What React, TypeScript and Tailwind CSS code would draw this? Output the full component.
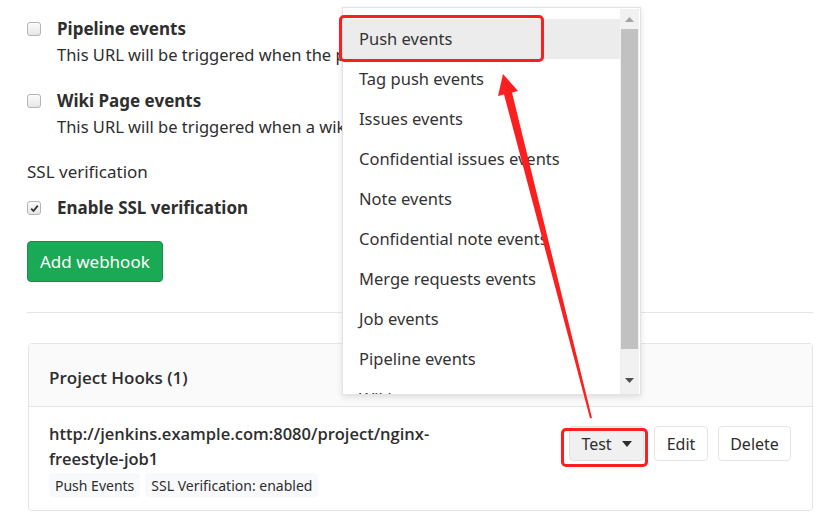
import React from "react"

const menuItems = [
  "Push events",
  "Tag push events",
  "Issues events",
  "Confidential issues events",
  "Note events",
  "Confidential note events",
  "Merge requests events",
  "Job events",
  "Pipeline events",
  "Wiki page events",
]

function Checkbox({ checked = false }: { checked?: boolean }) {
  return (
    <span className="mt-[6px] flex h-[14px] w-[14px] shrink-0 items-center justify-center rounded-[3px] border border-[#b5b5b5] bg-gradient-to-b from-[#fcfcfc] to-[#e6e6e6]">
      {checked && (
        <svg width="9" height="9" viewBox="0 0 9 9">
          <path d="M1.2 4.6 L3.5 7 L7.8 1.6" fill="none" stroke="#333" strokeWidth="1.8" />
        </svg>
      )}
    </span>
  )
}

function EventOption({ title, desc }: { title: string; desc: string }) {
  return (
    <div className="flex gap-[16px]">
      <Checkbox />
      <div>
        <div className="text-[17px] font-bold leading-[26px] text-[#2e2e2e]">{title}</div>
        <div className="text-[16.5px] leading-[26px] text-[#2e2e2e]">{desc}</div>
      </div>
    </div>
  )
}

export default function App() {
  return (
    <div
      className="relative h-[516px] w-[829px] overflow-hidden bg-white text-[#2e2e2e]"
      style={{ fontFamily: '"Noto Sans", "Open Sans", sans-serif' }}
    >
      <div className="pl-[27px] pr-[16px] pt-[16px]">
        <div className="flex flex-col gap-[20px]">
          <EventOption title="Pipeline events" desc="This URL will be triggered when the pipeline status changes" />
          <EventOption title="Wiki Page events" desc="This URL will be triggered when a wiki page is created/updated" />
        </div>

        <div className="mt-[19px] text-[17px] leading-[26px]">SSL verification</div>
        <div className="mt-[10px] flex gap-[16px]">
          <Checkbox checked />
          <div className="text-[17px] font-bold leading-[26px]">Enable SSL verification</div>
        </div>

        <button className="mt-[20px] h-[41px] rounded-[4px] border border-[#168f48] bg-[#1aaa55] px-[12px] text-[17px] text-white">
          Add webhook
        </button>

        <div className="mt-[30px] border-t border-[#e5e5e5]" />

        <div className="mt-[30px] ml-px rounded-[4px] border border-[#e5e5e5]">
          <div
            className="flex h-[63px] items-center border-b border-[#e5e5e5] bg-[#fafafa] px-[20px] pt-[5px] text-[17px] font-semibold"
            style={{ fontFamily: '"Open Sans", "Noto Sans", sans-serif' }}
          >
            Project Hooks (1)
          </div>
          <div className="flex justify-between pb-[13px] pl-[20px] pr-[21px] pt-[14px]">
            <div>
              <div
                className="text-[16.5px] font-semibold leading-[25px]"
                style={{ fontFamily: '"Open Sans", "Noto Sans", sans-serif' }}
              >
                http://jenkins.example.com:8080/project/nginx-
                <br />
                freestyle-job1
              </div>
              <div className="mt-[2px] flex gap-[5px]">
                <span className="flex h-[24px] items-center rounded-[4px] bg-[#f8f9fb] px-[6px] text-[14px]">Push Events</span>
                <span className="flex h-[24px] items-center rounded-[4px] bg-[#f8f9fb] px-[6px] text-[14px]">
                  SSL Verification: enabled
                </span>
              </div>
            </div>
            <div className="mt-[5px] flex gap-[10px]">
              <button className="flex h-[35px] w-[75px] items-center justify-center gap-[10px] rounded-[4px] border border-[#e0e0e0] bg-[#f0f0f0] text-[16px]">
                Test
                <svg width="10" height="6" viewBox="0 0 10 6">
                  <path d="M0 0 H10 L5 6 Z" fill="#2e2e2e" />
                </svg>
              </button>
              <button className="h-[35px] w-[54px] rounded-[4px] border border-[#e5e5e5] bg-white text-[16px]">Edit</button>
              <button className="h-[35px] w-[73px] rounded-[4px] border border-[#e5e5e5] bg-white text-[16px]">Delete</button>
            </div>
          </div>
        </div>
      </div>

      {/* open select menu */}
      <div className="absolute left-[342px] top-[7px] flex h-[388px] w-[299px] border border-[#e3e3e3] bg-white shadow-[0_2px_6px_rgba(0,0,0,0.12)]">
        <div className="flex-1 overflow-hidden pt-[11px]">
          {menuItems.map((item, i) => (
            <div
              key={item}
              className={`flex h-[40px] items-center pl-[16px] text-[16.5px] text-[#333] ${i === 0 ? "bg-[#ececec]" : ""}`}
            >
              {item}
            </div>
          ))}
        </div>
        <div className="mr-px mt-px flex w-[19px] flex-col bg-[#f1f1f1]">
          <div className="flex h-[20px] items-center justify-center">
            <svg width="9" height="5" viewBox="0 0 9 5">
              <path d="M0 5 L4.5 0 L9 5 Z" fill="#a3a3a3" />
            </svg>
          </div>
          <div className="mx-px h-[320px] bg-[#c1c1c1]" />
          <div className="flex flex-1 items-end justify-center pb-[11px]">
            <svg width="9" height="5" viewBox="0 0 9 5">
              <path d="M0 0 H9 L4.5 5 Z" fill="#505050" />
            </svg>
          </div>
        </div>
      </div>

      {/* annotations */}
      <div className="absolute left-[339px] top-[15px] h-[47px] w-[205px] rounded-[5px] border-[3px] border-[#fb1f1f]" />
      <div className="absolute left-[561px] top-[428px] h-[39px] w-[87px] rounded-[5px] border-[3px] border-[#fb1f1f]" />
      <svg className="absolute left-0 top-0" width="829" height="516">
        <polygon
          points="503,74 518,91 512,92.5 592,418 590,418.3 504,94.5 498,96"
          fill="#fb1f1f"
        />
      </svg>
    </div>
  )
}
